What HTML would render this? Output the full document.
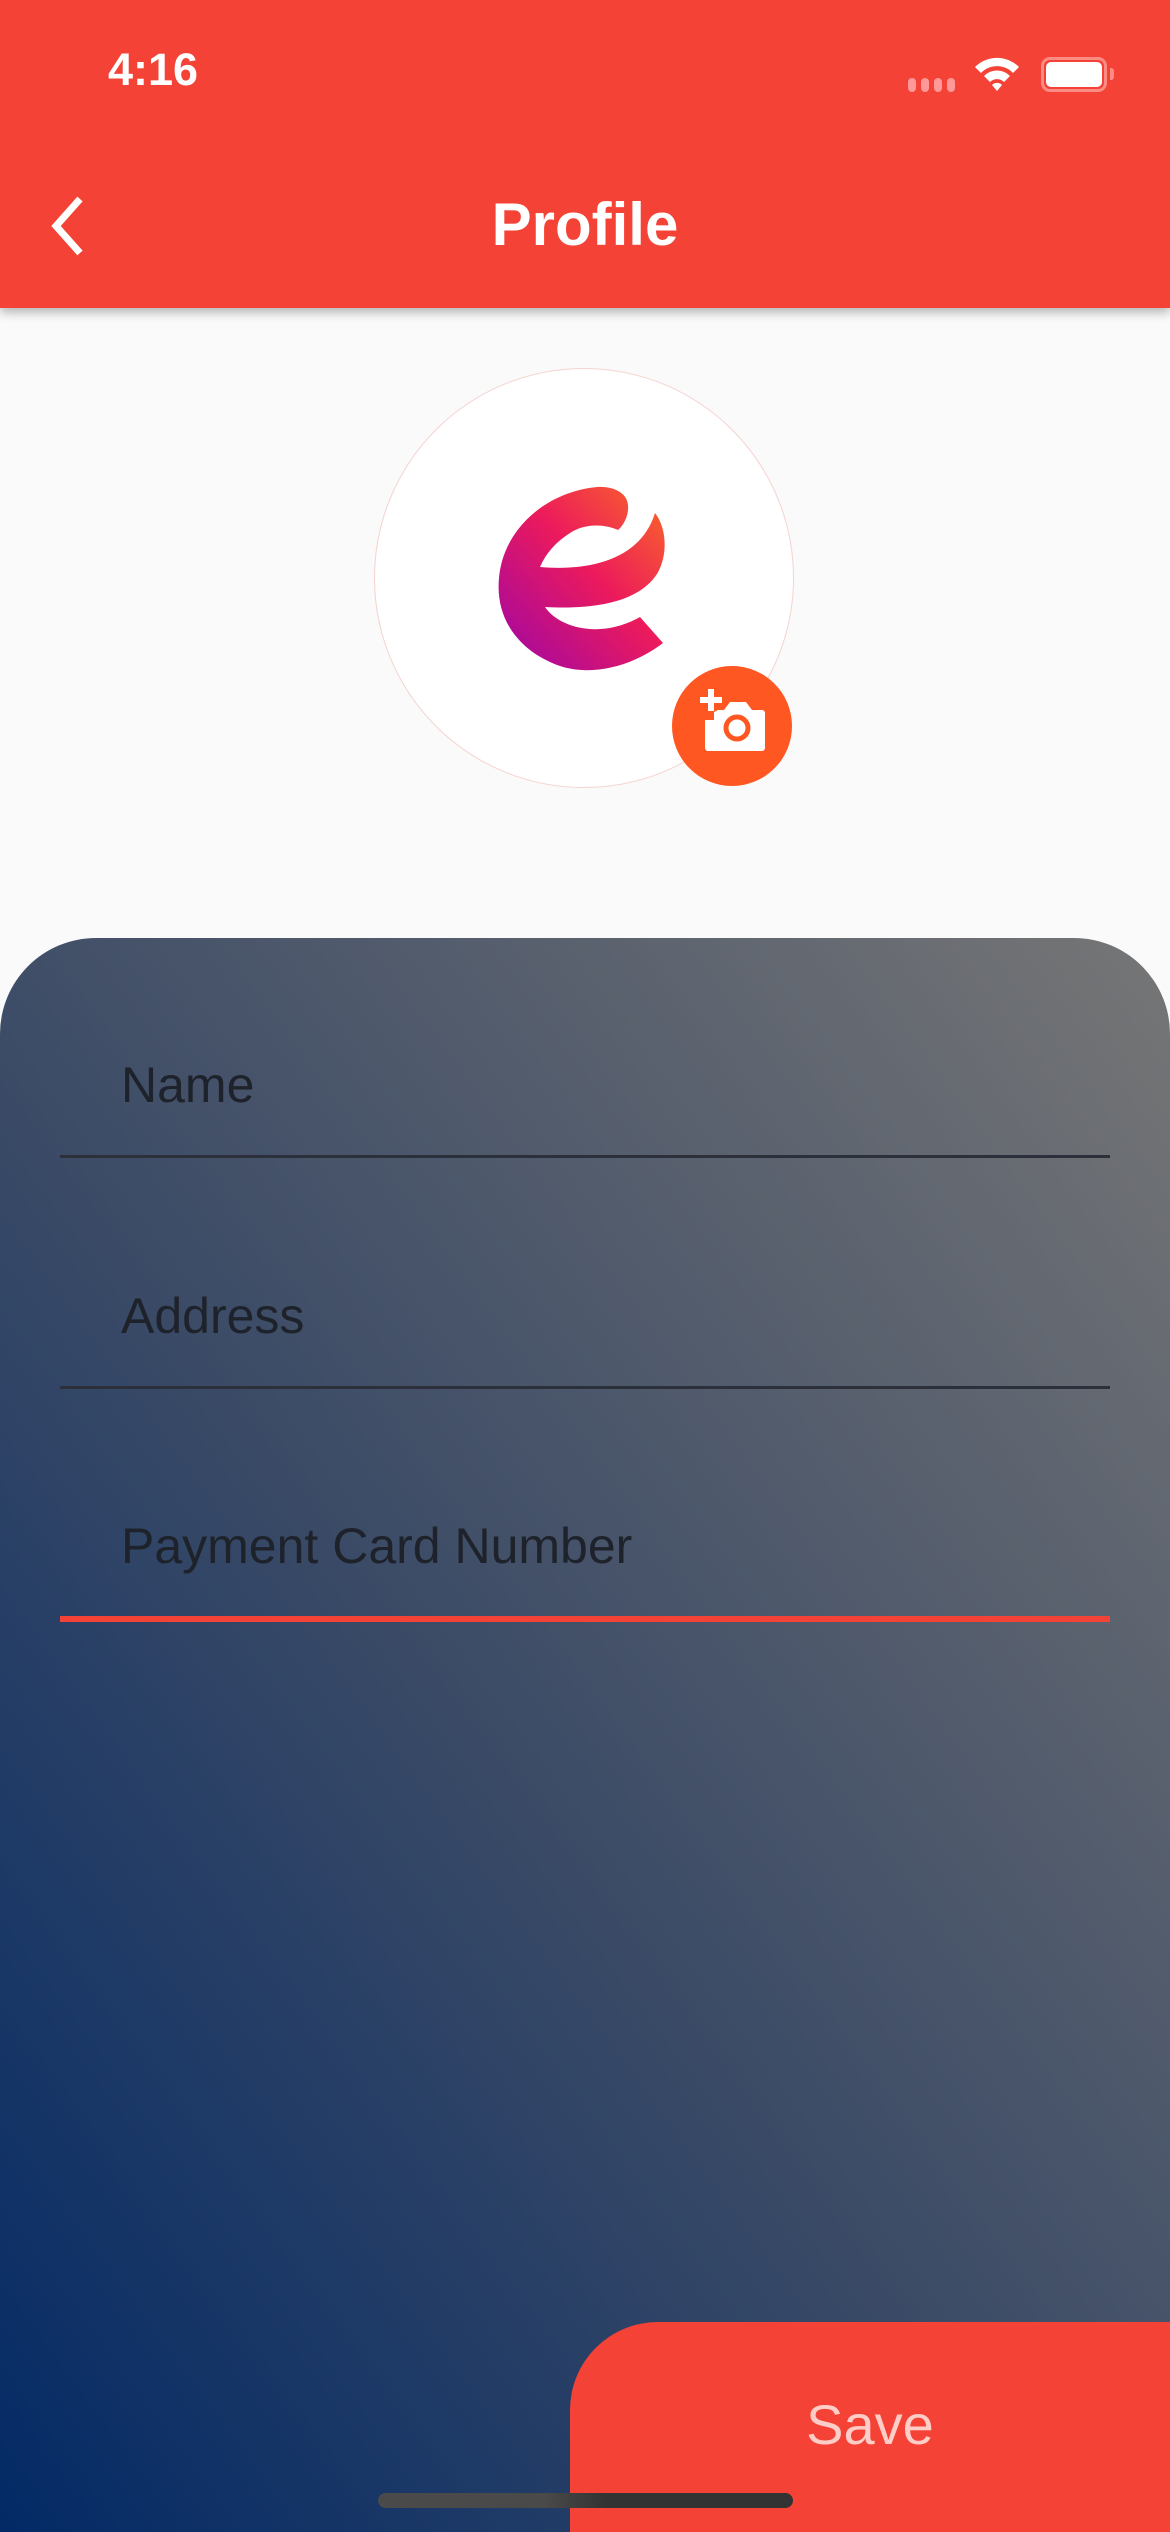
<!DOCTYPE html>
<html><head><meta charset="utf-8"><style>
*{margin:0;padding:0;box-sizing:border-box}
html,body{width:1170px;height:2532px;overflow:hidden;background:#fafafa;font-family:"Liberation Sans",sans-serif}
.hdr{position:absolute;left:0;top:0;width:1170px;height:308px;background:#f44336;box-shadow:0 4px 10px rgba(0,0,0,.3);z-index:2}
.time{position:absolute;left:108px;top:44px;color:#fff;font-size:45px;font-weight:bold}
.title{position:absolute;left:0;width:1170px;top:190px;text-align:center;color:#fff;font-size:60px;font-weight:bold}
.panel{position:absolute;left:0;top:938px;width:1170px;height:1594px;border-radius:96px 96px 0 0;background:linear-gradient(to top right,#032a66 0%,#3a4a66 45%,#767676 100%)}
.lbl{position:absolute;left:121px;font-size:50px;color:#1e222b}
.line{position:absolute;left:60px;width:1050px;height:3px;background:#2b303b}
.save{position:absolute;left:570px;top:2322px;width:600px;height:210px;background:#f44336;border-top-left-radius:88px}
.save span{position:absolute;left:0;width:600px;top:70px;text-align:center;color:#ffcdc7;font-size:56px}
.home{position:absolute;left:378px;top:2493px;width:415px;height:15px;border-radius:8px;background:linear-gradient(to right,#4a4a4a 40%,#333 55%)}
</style></head><body>
<div class="hdr">
 <div class="time">4:16</div>
 <div style="position:absolute;left:908px;top:78px;">
  <span style="display:inline-block;width:8px;height:14px;border-radius:4px;background:#f99;margin-right:5px"></span><span style="display:inline-block;width:8px;height:14px;border-radius:4px;background:#f99;margin-right:5px"></span><span style="display:inline-block;width:8px;height:14px;border-radius:4px;background:#f99;margin-right:5px"></span><span style="display:inline-block;width:8px;height:14px;border-radius:4px;background:#f99"></span>
 </div>
 <svg style="position:absolute;left:972px;top:54px" width="50" height="40" viewBox="0 0 50 40"><path d="M3 13 A31 31 0 0 1 47 13 L41 19 A22 22 0 0 0 9 19Z M12 22 A18 18 0 0 1 38 22 L32 28 A10 10 0 0 0 18 28Z M25 37 L20 31 A7 7 0 0 1 30 31Z" fill="#fff"/></svg>
 <div style="position:absolute;left:1041px;top:57px;width:66px;height:35px;border:3px solid #fb8c84;border-radius:9px"></div>
 <div style="position:absolute;left:1046px;top:62px;width:56px;height:25px;background:#fff;border-radius:5px"></div>
 <div style="position:absolute;left:1110px;top:68px;width:4px;height:12px;background:#fb8c84;border-radius:0 3px 3px 0"></div>
 <svg style="position:absolute;left:44px;top:195px" width="44" height="62" viewBox="0 0 44 62"><path d="M36 4 L12 31 L36 58" stroke="#fff" stroke-width="7" fill="none"/></svg>
 <div class="title">Profile</div>
</div>
<div style="position:absolute;left:374px;top:368px;width:420px;height:420px;border-radius:50%;background:#fff;border:1px solid #f6d3d0"></div>
<svg style="position:absolute;left:480px;top:470px" width="200" height="220" viewBox="480 470 200 220">
<defs><linearGradient id="g" x1="0" y1="1" x2="1" y2="0"><stop offset="0" stop-color="#9c06a8"/><stop offset=".55" stop-color="#ec1a5c"/><stop offset="1" stop-color="#fa6a25"/></linearGradient></defs>
<path d="M618 530 C605 524 585 523 570 533 C556 542 546 553 540 567 C585 571 640 562 655 513 C667 528 668 556 657 574 C640 600 600 610 545 607 C558 627 600 640 640 617 L663 643 C630 668 590 676 560 666 C520 652 495 620 499 578 C503 530 545 492 597 487 C612 486 627 492 628 505 C629 515 624 525 618 530Z" fill="url(#g)"/>
</svg>
<div style="position:absolute;left:672px;top:666px;width:120px;height:120px;border-radius:50%;background:#ff5722"></div>
<svg style="position:absolute;left:692px;top:686px" width="80" height="80" viewBox="0 0 80 80">
<rect x="16" y="3" width="6" height="22" fill="#fff"/><rect x="8" y="11" width="22" height="6" fill="#fff"/>
<path d="M26 24 h6 l6 -8 h16 l6 8 h10 a3 3 0 0 1 3 3 v35 a3 3 0 0 1 -3 3 h-54 a3 3 0 0 1 -3 -3 v-28 h9 v-8z" fill="#fff"/>
<circle cx="45" cy="42" r="11" fill="none" stroke="#ff5722" stroke-width="5"/>
</svg>
<div class="panel"></div>
<div class="lbl" style="top:1056px">Name</div>
<div class="line" style="top:1155px"></div>
<div class="lbl" style="top:1287px">Address</div>
<div class="line" style="top:1386px"></div>
<div class="lbl" style="top:1517px">Payment Card Number</div>
<div class="line" style="top:1616px;height:6px;background:#f44336"></div>
<div class="save"><span>Save</span></div>
<div class="home"></div>
</body></html>
